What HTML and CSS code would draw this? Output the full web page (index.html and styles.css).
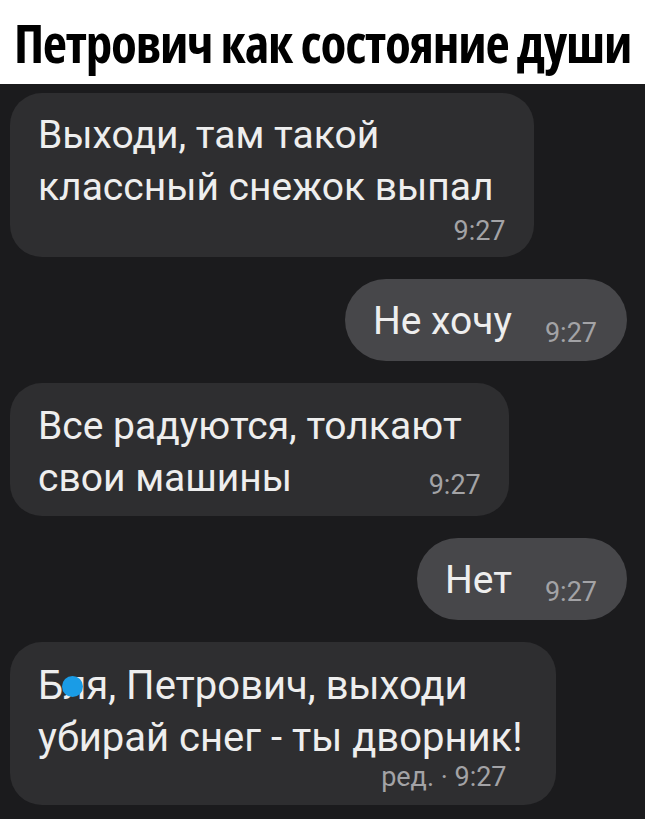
FILE: index.html
```html
<!DOCTYPE html>
<html lang="ru">
<head>
<meta charset="utf-8">
<title>Петрович как состояние души</title>
<link rel="stylesheet" href="styles.css">
</head>
<body>
<header class="header">
  <h1 class="title">Петрович как состояние души</h1>
</header>
<main class="chat">
  <div class="bubble in stack b1">
    <div class="text">Выходи, там такой<br>классный снежок выпал</div>
    <div class="time">9:27</div>
  </div>
  <div class="bubble out inline b2">
    <div class="text">Не хочу</div>
    <div class="time">9:27</div>
  </div>
  <div class="bubble in overlay b3">
    <div class="text">Все радуются, толкают<br>свои машины</div>
    <div class="time">9:27</div>
  </div>
  <div class="bubble out inline b4">
    <div class="text">Нет</div>
    <div class="time">9:27</div>
  </div>
  <div class="bubble in stack b5">
    <div class="text">Б<span class="cens">л</span>я, Петрович, выходи<br>убирай снег - ты дворник!</div>
    <div class="time">ред. · 9:27</div>
  </div>
</main>
</body>
</html>
```
FILE: styles.css
```css
* { box-sizing: border-box; }
html, body { margin: 0; padding: 0; }
body {
  width: 645px;
  height: 819px;
  overflow: hidden;
  background: #1b1b1d;
  font-family: Roboto, "Liberation Sans", sans-serif;
}
.header {
  background: #ffffff;
  height: 84px;
  display: flex;
  align-items: center;
  justify-content: center;
}
.title {
  margin: 0;
  font-family: "Open Sans", "DejaVu Sans", sans-serif;
  font-weight: 700;
  font-stretch: 75%;
  font-size: 53px;
  line-height: 1;
  color: #000;
  letter-spacing: -1.2px;
  white-space: nowrap;
}
.chat {
  display: flex;
  flex-direction: column;
  gap: 22px;
  padding: 9px 18px 0 10px;
}
.bubble {
  border-radius: 32px;
  color: #eeeeee;
  width: fit-content;
}
.bubble.in { background: #2e2e30; align-self: flex-start; }
.bubble.out { background: #47474a; align-self: flex-end; border-radius: 41px; }
.text {
  font-size: 39px;
  line-height: 52px;
  white-space: nowrap;
}
.time {
  font-size: 27px;
  line-height: 27px;
  color: #a3a3a6;
  white-space: nowrap;
}
.stack {
  display: flex;
  flex-direction: column;
  padding: 16px 28px 12px 28px;
}
.stack .time { align-self: flex-end; margin-top: 5px; }
.b1 .text { padding-right: 12px; }
.b5 { padding-top: 18px; padding-bottom: 14px; padding-right: 33px; }
.b5 .text { font-size: 40px; }
.b5 .time { margin-top: 0; margin-right: 16px; }
.inline {
  display: flex;
  align-items: flex-end;
  gap: 33px;
  padding: 16px 30px 14px 28px;
}
.overlay {
  display: grid;
  padding: 17px 28px 12px 28px;
}
.overlay .text { padding-right: 19px; }
.overlay .text, .overlay .time { grid-area: 1 / 1; }
.overlay .time { justify-self: end; align-self: end; margin-bottom: 5px; }
.cens { position: relative; }
.cens::after {
  content: "";
  position: absolute;
  left: -1px;
  top: 14px;
  width: 21px;
  height: 21px;
  border-radius: 50%;
  background: #1a9ce6;
}
```
